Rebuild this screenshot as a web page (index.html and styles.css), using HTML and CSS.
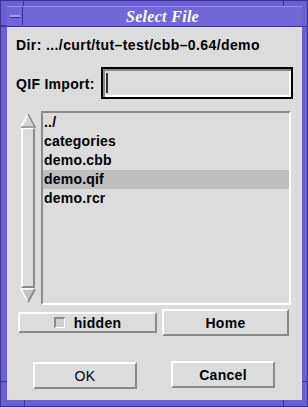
FILE: index.html
```html
<!DOCTYPE html>
<html lang="en">

<head>
    <meta charset="UTF-8">
    <title>Select File</title>
    <link rel="stylesheet" href="styles.css">
</head>

<body>
    <div class="window">
        <div class="titlebar">
            <div class="menu-btn"><span class="dash"></span></div>
            <div class="title">Select File</div>
        </div>
        <div class="content">
            <div class="dir">Dir: .../curt/tut&#8211;test/cbb&#8211;0.64/demo</div>
            <div class="import-row">
                <label class="import-label" for="qif">QIF Import:</label>
                <div class="input-box">
                    <span class="cursor"></span>
                    <input type="text" id="qif">
                </div>
            </div>
            <div class="browser">
                <div class="scrollbar">
                    <svg class="arrow" width="16" height="15" viewBox="0 0 16 15">
                        <polygon points="8,1 15,14 1,14" fill="#d4d4d4" />
                        <polyline points="1,14 8,1" stroke="#ffffff" stroke-width="2" fill="none" />
                        <polyline points="8,1 15,14 1,14" stroke="#8a8a8a" stroke-width="1.5" fill="none" />
                    </svg>
                    <div class="slider"></div>
                    <svg class="arrow" width="16" height="15" viewBox="0 0 16 15">
                        <polygon points="1,1 15,1 8,14" fill="#c4c4c4" />
                        <polyline points="8,14 1,1 15,1" stroke="#ffffff" stroke-width="1.5" fill="none" />
                        <polyline points="15,1 8,14" stroke="#8a8a8a" stroke-width="2" fill="none" />
                    </svg>
                </div>
                <ul class="file-list">
                    <li>../</li>
                    <li>categories</li>
                    <li>demo.cbb</li>
                    <li class="selected">demo.qif</li>
                    <li>demo.rcr</li>
                </ul>
            </div>
            <div class="option-row">
                <button type="button" class="btn btn-hidden"><span class="check"></span>hidden</button>
                <button type="button" class="btn btn-home">Home</button>
            </div>
            <div class="action-row">
                <button type="button" class="btn btn-ok">OK</button>
                <button type="button" class="btn btn-cancel">Cancel</button>
            </div>
        </div>
        <span class="tick tick-tl-v"></span>
        <span class="tick tick-tl-h"></span>
        <span class="tick tick-tr-v"></span>
        <span class="tick tick-br-v"></span>
        <span class="tick tick-br-h"></span>
        <span class="tick tick-bl-v"></span>
        <span class="tick tick-bl-h"></span>
    </div>
</body>

</html>
```
FILE: styles.css
```css
body {
    margin: 0;
    font-family: "Liberation Sans", Arial, sans-serif;
    background: #6a5cd0;
}

.window {
    position: relative;
    width: 308px;
    height: 407px;
    box-sizing: border-box;
    background: #6c5ed4;
    border: 1px solid #3c3090;
    display: flex;
    flex-direction: column;
}

.titlebar {
    display: flex;
    height: 26px;
    box-sizing: border-box;
    padding: 5px 5px 0 6px;
    border-bottom: 1px solid #3c3090;
}

.menu-btn {
    width: 16px;
    height: 19px;
    box-sizing: border-box;
    background: #7266d8;
    border-right: 1px solid #3c3090;
    border-top: 1px solid #9a90ee;
    display: flex;
    align-items: center;
    justify-content: center;
}

.dash {
    width: 10px;
    height: 2px;
    background: #a49af0;
    border-bottom: 1px solid #3c3090;
}

.title {
    flex: 1;
    background: #7266d8;
    border-top: 1px solid #9a90ee;
    color: #ffffff;
    font-family: "Liberation Serif", "Times New Roman", serif;
    font-weight: bold;
    font-style: italic;
    font-size: 16px;
    line-height: 17px;
    text-align: center;
    letter-spacing: 0.3px;
    padding-top: 1px;
}

.content {
    flex: 1;
    margin: 0 5px 6px 6px;
    background: #dcdcdc;
    font-weight: bold;
    font-size: 14px;
    color: #000000;
}

.dir {
    margin: 10px 0 0 9px;
    line-height: 16px;
    height: 16px;
    letter-spacing: 0.4px;
}

.import-row {
    display: flex;
    align-items: center;
    margin-top: 14px;
    height: 32px;
}

.import-label {
    width: 85px;
    margin-left: 9px;
    line-height: 16px;
    padding-top: 2px;
    letter-spacing: 0.3px;
}

.input-box {
    position: relative;
    width: 192px;
    height: 32px;
    box-sizing: border-box;
    border: 2px solid #000000;
    background: #dcdcdc;
    box-shadow: inset 2px 2px 0 #8a8a8a, inset -2px -2px 0 #ffffff;
}

.input-box input {
    width: 100%;
    height: 100%;
    box-sizing: border-box;
    border: none;
    background: transparent;
    outline: none;
}

.cursor {
    position: absolute;
    left: 3px;
    top: 4px;
    width: 2px;
    height: 20px;
    background: #333333;
}

.browser {
    display: flex;
    margin-top: 12px;
    height: 194px;
}

.scrollbar {
    width: 16px;
    margin: 2px 0 0 13px;
    height: 190px;
    display: flex;
    flex-direction: column;
}

.arrow {
    display: block;
}

.slider {
    flex: 1;
    box-sizing: border-box;
    background: #dcdcdc;
    border-left: 2px solid #ffffff;
    border-top: 1px solid #ffffff;
    border-right: 2px solid #8a8a8a;
    border-bottom: 2px solid #8a8a8a;
    margin: 0 1px;
}

.file-list {
    list-style: none;
    margin: 0 0 0 5px;
    padding: 0;
    width: 250px;
    height: 194px;
    box-sizing: border-box;
    border-top: 2px solid #8a8a8a;
    border-left: 2px solid #8a8a8a;
    border-right: 2px solid #ffffff;
    border-bottom: 2px solid #ffffff;
}

.file-list li {
    height: 19px;
    line-height: 19px;
    padding-left: 1px;
    letter-spacing: 0.2px;
}

.file-list li.selected {
    background: #bebebe;
}

.option-row {
    display: flex;
    align-items: center;
    height: 27px;
    margin-top: 4px;
}

.btn {
    font-family: "Liberation Sans", Arial, sans-serif;
    font-weight: bold;
    font-size: 14px;
    color: #000000;
    background: #dcdcdc;
    box-sizing: border-box;
    border-top: 2px solid #ffffff;
    border-left: 2px solid #ffffff;
    border-right: 2px solid #8a8a8a;
    border-bottom: 2px solid #8a8a8a;
    padding: 0;
    display: flex;
    align-items: center;
    justify-content: center;
    letter-spacing: 0.3px;
}

.btn-hidden {
    width: 139px;
    height: 21px;
    margin-left: 11px;
}

.check {
    width: 11px;
    height: 11px;
    box-sizing: border-box;
    border-top: 2px solid #8a8a8a;
    border-left: 2px solid #8a8a8a;
    border-right: 1px solid #ffffff;
    border-bottom: 1px solid #ffffff;
    background: #cfcfcf;
    margin-right: 9px;
}

.btn-home {
    width: 127px;
    height: 27px;
    margin-left: 5px;
}

.action-row {
    display: flex;
    margin-top: 25px;
}

.btn-ok,
.btn-cancel {
    width: 104px;
    height: 27px;
}

.btn-ok {
    font-weight: normal;
    margin: 1px 0 0 26px;
}

.btn-cancel {
    margin-left: 34px;
}

.tick {
    position: absolute;
    background: #3c3090;
}

.tick-tl-v {
    left: 22px;
    top: 0;
    width: 1px;
    height: 5px;
}

.tick-tl-h {
    left: 0;
    top: 24px;
    width: 5px;
    height: 1px;
}

.tick-tr-v {
    left: 282px;
    top: 0;
    width: 1px;
    height: 5px;
}

.tick-br-v {
    left: 282px;
    bottom: 0;
    width: 1px;
    height: 6px;
}

.tick-br-h {
    right: 0;
    top: 380px;
    width: 5px;
    height: 1px;
}

.tick-bl-v {
    left: 23px;
    bottom: 0;
    width: 1px;
    height: 6px;
}

.tick-bl-h {
    left: 0;
    top: 380px;
    width: 6px;
    height: 1px;
}
```
